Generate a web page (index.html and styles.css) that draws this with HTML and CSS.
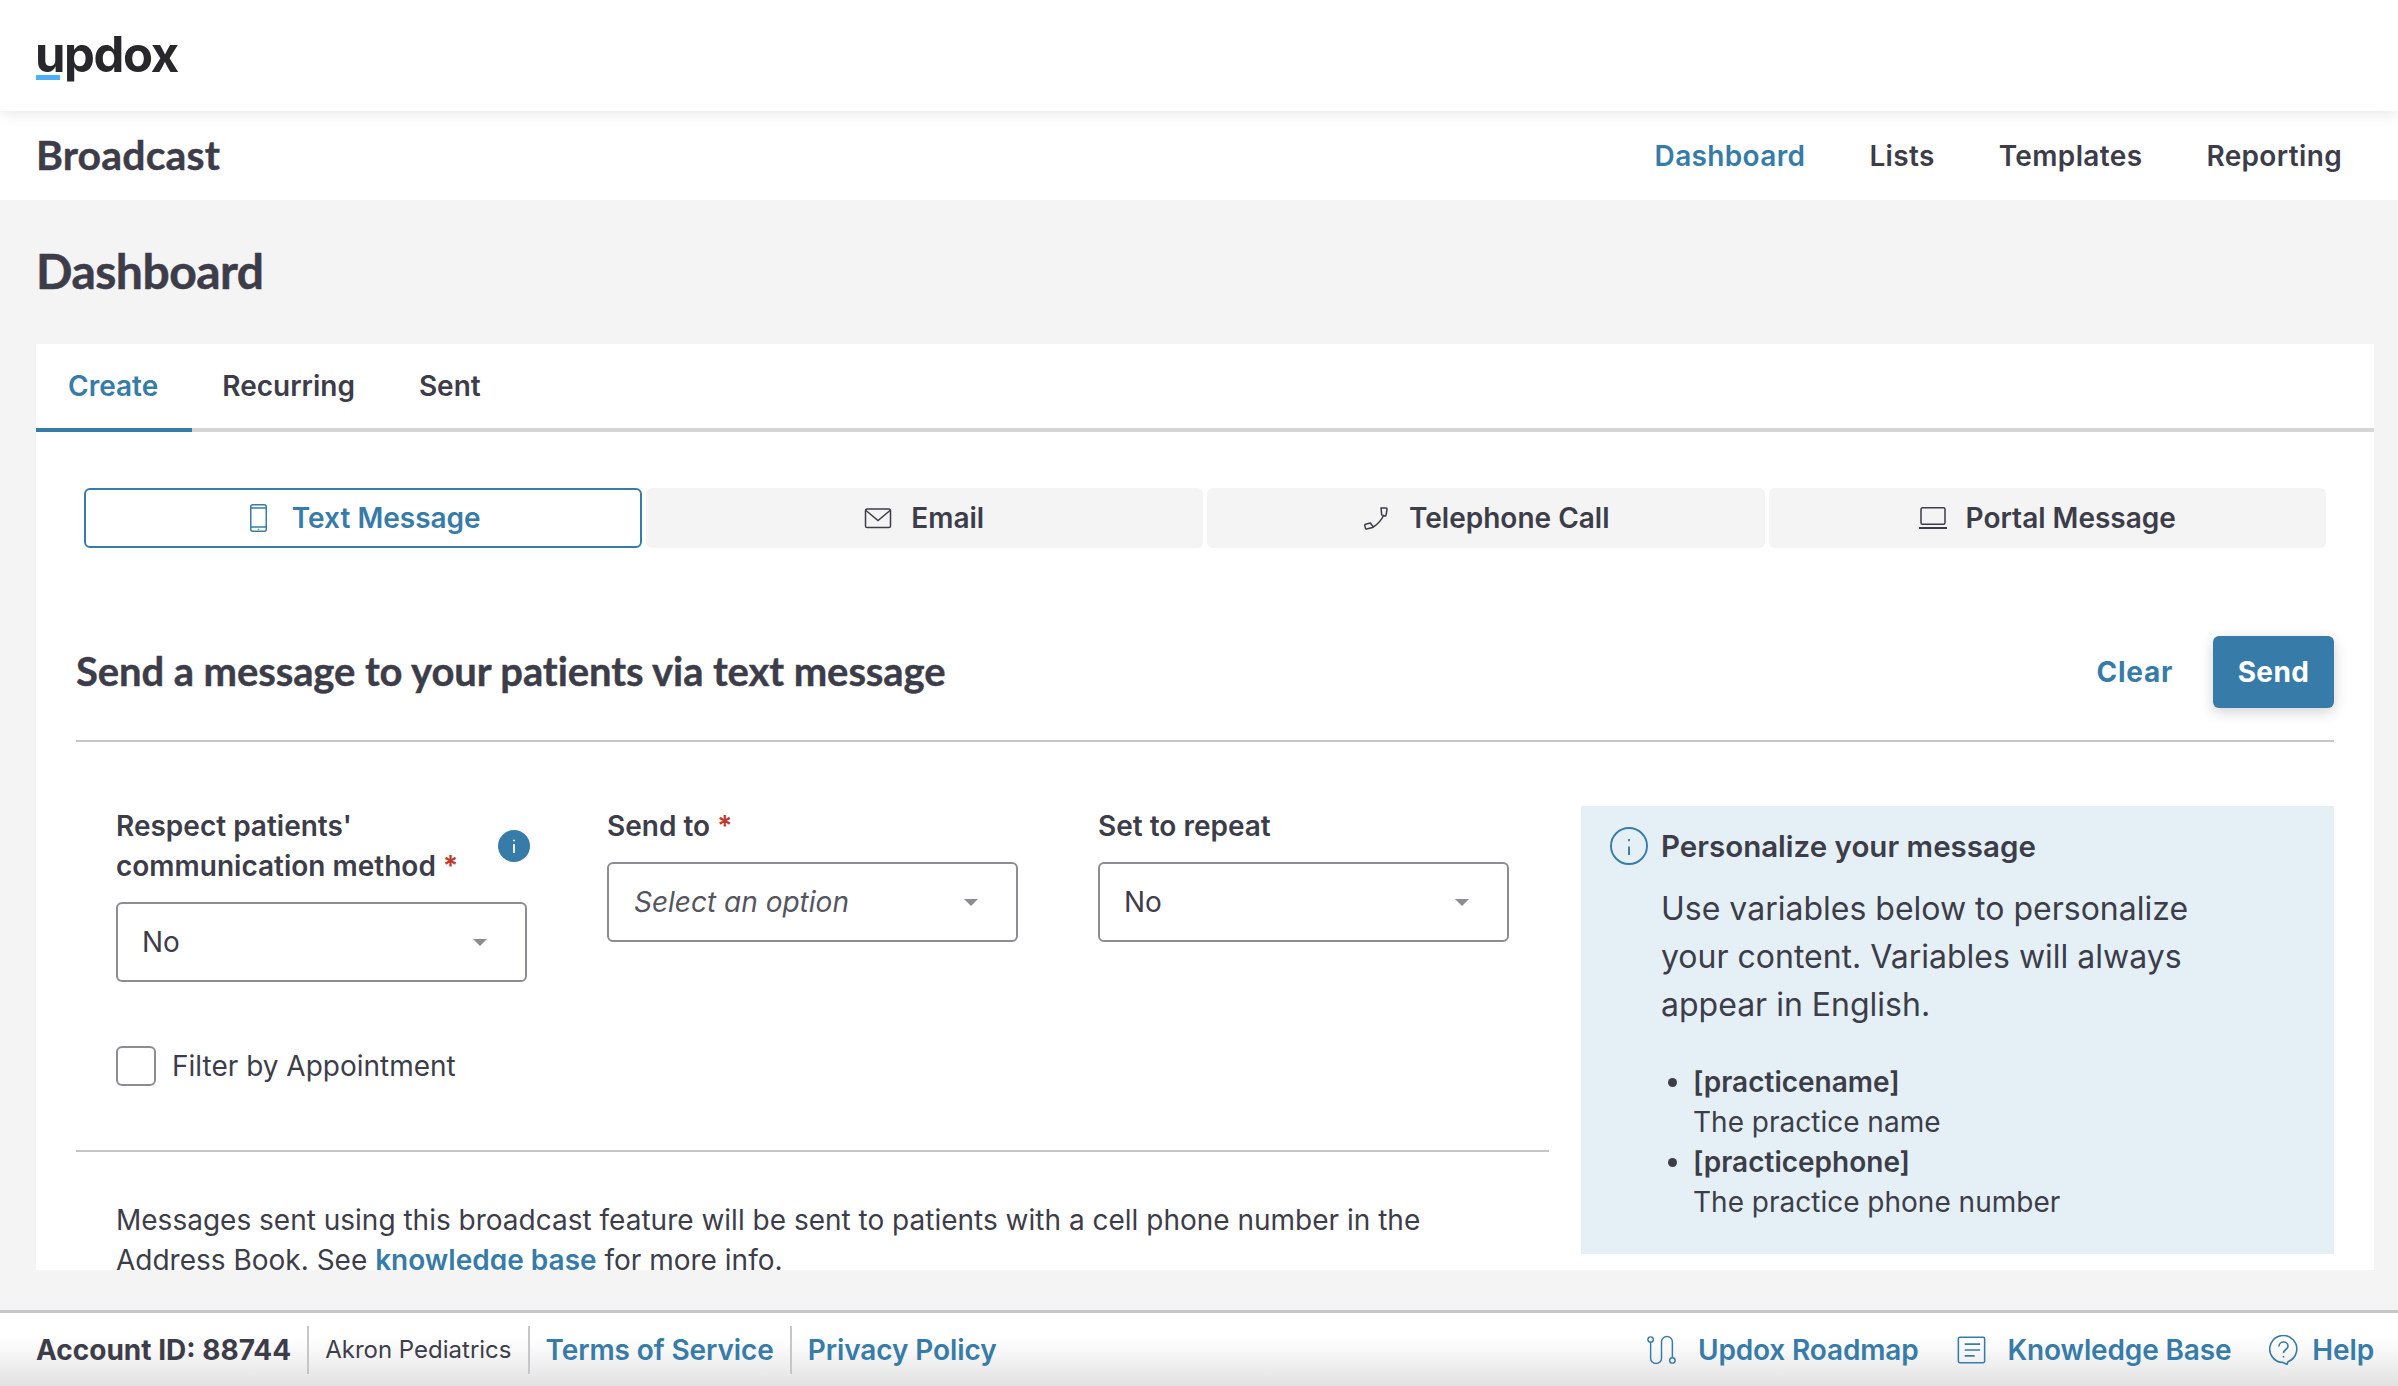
FILE: index.html
```html
<!DOCTYPE html>
<html lang="en">
<head>
<meta charset="utf-8">
<title>Broadcast Dashboard</title>
<link rel="stylesheet" href="styles.css">
</head>
<body>
<header class="topbar">
  <div class="logo"><span class="logo-text">updox</span><span class="logo-bar"></span></div>
</header>
<nav class="subnav">
  <div class="subnav-title">Broadcast</div>
  <div class="subnav-links">
    <a class="subnav-link is-active">Dashboard</a>
    <a class="subnav-link">Lists</a>
    <a class="subnav-link">Templates</a>
    <a class="subnav-link">Reporting</a>
  </div>
</nav>
<main class="main">
  <h1 class="page-title">Dashboard</h1>
  <section class="card">
    <div class="tabs">
      <a class="tab is-active">Create</a>
      <a class="tab">Recurring</a>
      <a class="tab">Sent</a>
    </div>
    <div class="channels">
      <a class="channel is-active">
        <svg class="channel-icon" viewBox="0 0 28 28" fill="none" stroke="currentColor" stroke-width="1.500"><rect x="5.750" y=".750" width="15.500" height="26.500" rx="2"/><path d="M5.750 4h15.500M5.750 23h15.500M13.500 24.700v1"/></svg>
        <span>Text Message</span>
      </a>
      <a class="channel">
        <svg class="channel-icon" viewBox="0 0 28 24" fill="none" stroke="currentColor" stroke-width="1.500"><rect x="1.500" y="3" width="25" height="18.500" rx="1.600"/><path d="M2 4.500l12 10 12-10"/></svg>
        <span>Email</span>
      </a>
      <a class="channel">
        <svg class="channel-icon" viewBox="-2.500 -2.500 28 28" fill="none" stroke="currentColor" stroke-width="1.500" stroke-linejoin="round"><path d="M16.500 1.500h5.300c.5 0 .7.400.7.900-.2 2.400-.6 5-1.300 7.200l-4-1.200zM19 9c-2 4.500-5.500 8.500-10.200 11.500L5.800 16.500 1 17.700c-.5.100-.8.600-.7 1.100l.7 3c.1.500.5.700 1 .6l7-1.600"/></svg>
        <span>Telephone Call</span>
      </a>
      <a class="channel">
        <svg class="channel-icon" viewBox="0 0 28 24" fill="none" stroke="currentColor" stroke-width="1.500"><rect x="2" y="1.750" width="24" height="16.500" rx="1.500"/><path d="M0 22h28" stroke-width="2"/></svg>
        <span>Portal Message</span>
      </a>
    </div>
    <div class="compose-head">
      <h2 class="compose-title">Send a message to your patients via text message</h2>
      <div class="compose-actions">
        <a class="link-clear">Clear</a>
        <button class="btn-send" type="button">Send</button>
      </div>
    </div>
    <div class="compose-body">
      <div class="compose-left">
        <div class="fields">
          <div class="field">
            <div class="field-label field-label-info">
              <span>Respect patients' communication method <span class="req">*</span></span>
              <span class="info-dot">
                <svg viewBox="0 0 32 32" class="info-dot-svg"><circle cx="16" cy="16" r="16" fill="#377ca8"/><path d="M16 9.700v1.600M16 14v9" stroke="#fff" stroke-width="1.800"/></svg>
              </span>
            </div>
            <div class="select"><span>No</span><i class="caret"></i></div>
          </div>
          <div class="field">
            <div class="field-label">Send to <span class="req">*</span></div>
            <div class="select"><span class="placeholder">Select an option</span><i class="caret"></i></div>
          </div>
          <div class="field">
            <div class="field-label">Set to repeat</div>
            <div class="select"><span>No</span><i class="caret"></i></div>
          </div>
        </div>
        <label class="check"><span class="check-box"></span><span>Filter by Appointment</span></label>
        <p class="notice">Messages sent using this broadcast feature will be sent to patients with a cell phone number in the Address Book. See <a class="notice-link">knowledge base</a> for more info.</p>
      </div>
      <aside class="panel">
        <svg class="panel-icon" viewBox="0 0 38 38" fill="none" stroke="#377ca8" stroke-width="1.900"><circle cx="19" cy="19" r="18"/><path d="M19 12v2.200M19 19.500V28"/></svg>
        <div class="panel-body">
          <h3 class="panel-title">Personalize your message</h3>
          <p class="panel-text">Use variables below to personalize your content. Variables will always appear in English.</p>
          <ul class="panel-list">
            <li><b>[practicename]</b><br>The practice name</li>
            <li><b>[practicephone]</b><br>The practice phone number</li>
          </ul>
        </div>
      </aside>
    </div>
  </section>
</main>
<footer class="footer">
  <div class="footer-left">
    <span class="foot-item foot-account">Account ID: 88744</span>
    <span class="foot-item foot-practice">Akron Pediatrics</span>
    <a class="foot-item foot-link">Terms of Service</a>
    <a class="foot-item foot-link">Privacy Policy</a>
  </div>
  <div class="footer-right">
    <a class="foot-action">
      <svg class="foot-icon" viewBox="0 0 32 32" fill="none" stroke="currentColor" stroke-width="1.600"><circle cx="4" cy="4.500" r="3"/><circle cx="28" cy="27.500" r="3"/><path d="M4 7.500V25a6 6 0 0 0 12 0V7a6 6 0 0 1 12 0v17.500"/></svg>
      <span>Updox Roadmap</span>
    </a>
    <a class="foot-action">
      <svg class="foot-icon" viewBox="0 0 32 32" fill="none" stroke="currentColor" stroke-width="1.700"><rect x="1.500" y="2" width="29" height="28" rx="1.500"/><path d="M8.500 9.500h17M8.500 16h17M8.500 22.500h11"/></svg>
      <span>Knowledge Base</span>
    </a>
    <a class="foot-action foot-action-help">
      <svg class="foot-icon" viewBox="0 0 29 30" fill="none" stroke="currentColor" stroke-width="1.600" stroke-linejoin="round"><path d="M14.300 27.500A13.500 13.500 0 1 1 19 26.650L18 29.500z"/><path d="M10 11.500c0-2.700 2-4.500 4.500-4.500S19 8.800 19 11.200c0 3.300-4.500 3.300-4.500 6.800M14.500 21v1.500"/></svg>
      <span>Help</span>
    </a>
  </div>
</footer>
</body>
</html>
```

FILE: styles.css
```css
* { box-sizing: border-box; }
html, body { margin: 0; height: 100%; }
body {
  height: 1386px;
  overflow: hidden;
  display: flex;
  flex-direction: column;
  background: #f4f4f4;
  color: #3d3d4a;
  font-family: Inter, "Liberation Sans", sans-serif;
  font-size: 28px;
}
a { text-decoration: none; }
.topbar {
  position: relative;
  z-index: 1;
  flex: none;
  height: 111px;
  background: #fff;
  box-shadow: 0 2px 14px rgba(0, 0, 0, .1);
  padding: 23px 36px 0;
}
.logo { position: relative; display: inline-block; height: 64px; margin-left: -1px; }
.logo-text {
  font-family: Inter, sans-serif;
  font-weight: 700;
  font-size: 49px;
  line-height: 64px;
  letter-spacing: -1.400px;
  color: #28282c;
}
.logo-bar {
  position: absolute;
  left: 1px;
  top: 52px;
  width: 24px;
  height: 5px;
  background: #4fb0fa;
}
.subnav {
  flex: none;
  height: 89px;
  background: #fff;
  display: flex;
  align-items: center;
  justify-content: space-between;
  padding: 0 56px 0 36px;
}
.subnav-title {
  font-family: Lato, sans-serif;
  font-weight: 700;
  font-size: 41px;
  line-height: 48px;
  margin-top: -2px;
  letter-spacing: .15px;
  -webkit-text-stroke: .4px #3d3d4a;
  color: #3d3d4a;
}
.subnav-links { display: flex; gap: 64px; }
.subnav-link { font-weight: 600; font-size: 28px; letter-spacing: .35px; color: #3d3d4a; }
.subnav-link.is-active { color: #377ca8; }
.main { flex: none; height: 1110px; display: flex; flex-direction: column; }
.page-title {
  flex: none;
  height: 144px;
  margin: 0;
  padding: 0 36px;
  line-height: 142px;
  font-family: Lato, sans-serif;
  font-weight: 700;
  font-size: 48px;
  letter-spacing: -.5px;
  -webkit-text-stroke: .5px #3d3d4a;
  color: #3d3d4a;
}
.card {
  flex: none;
  height: 926px;
  margin: 0 24px 0 36px;
  background: #fff;
  overflow: hidden;
}
.tabs { display: flex; height: 88px; border-bottom: 4px solid #d6d6d6; }
.tab {
  height: 88px;
  padding: 0 32px;
  line-height: 84px;
  font-weight: 600;
  font-size: 28px;
  color: #3d3d4a;
}
.tab.is-active {
  padding-right: 34px;
  margin-right: -2px;
  color: #377ca8;
  border-bottom: 4px solid #377ca8;
}
.channels {
  display: grid;
  grid-template-columns: repeat(4, 1fr);
  gap: 4px;
  padding: 56px 48px 0;
}
.channel {
  height: 60px;
  display: flex;
  align-items: center;
  justify-content: center;
  gap: 19px;
  border-radius: 6px;
  background: #f4f4f4;
  font-weight: 600;
  font-size: 28px;
  color: #3d3d4a;
}
.channel.is-active { background: #fff; border: 2px solid #377ca8; color: #377ca8; }
.channel-icon { width: 28px; height: 28px; flex: none; }
.compose-head {
  box-sizing: content-box;
  display: flex;
  align-items: center;
  justify-content: space-between;
  height: 72px;
  margin: 88px 40px 0;
  padding-bottom: 32px;
  border-bottom: 2px solid #c6c6ca;
}
.compose-title {
  margin: -3px 0 0;
  font-family: Lato, sans-serif;
  font-weight: 700;
  font-size: 40px;
  letter-spacing: -.1px;
  -webkit-text-stroke: .4px #3d3d4a;
  color: #3d3d4a;
}
.compose-actions { display: flex; align-items: center; gap: 40px; }
.link-clear { font-weight: 700; font-size: 28px; color: #377ca8; letter-spacing: .7px; }
.btn-send {
  width: 121px;
  height: 72px;
  border: 0;
  border-radius: 6px;
  background: #377ca8;
  color: #fff;
  font-family: inherit;
  font-weight: 700;
  font-size: 28px;
  letter-spacing: .4px;
  box-shadow: 0 4px 14px rgba(0, 0, 0, .18);
}
.compose-body { display: flex; gap: 32px; margin: 64px 40px 0; }
.compose-left { width: 1473px; flex: none; }
.fields {
  display: flex;
  align-items: flex-start;
  gap: 80px;
  padding: 0 40px;
}
.field { width: 411px; flex: none; }
.field-label {
  font-weight: 600;
  font-size: 28px;
  line-height: 40px;
  color: #3d3d4a;
  margin-bottom: 16px;
}
.field-label-info { display: flex; align-items: center; justify-content: space-between; gap: 24px; }
.req { color: #c0392b; }
.info-dot { flex: none; display: flex; margin: 0 -3px 0 0; }
.info-dot-svg { width: 32px; height: 32px; }
.select {
  height: 80px;
  display: flex;
  align-items: center;
  justify-content: space-between;
  padding: 0 38px 0 24px;
  border: 2px solid #8c8c92;
  border-radius: 6px;
  background: #fff;
  font-size: 28px;
}
.placeholder { margin-left: 1px; font-style: italic; color: #55555f; }
.caret {
  width: 0;
  height: 0;
  border-left: 7px solid transparent;
  border-right: 7px solid transparent;
  border-top: 7px solid #8c8c92;
}
.check {
  display: flex;
  align-items: center;
  gap: 16px;
  margin: 64px 0 0 40px;
  font-size: 28px;
  line-height: 40px;
}
.check-box {
  width: 40px;
  height: 40px;
  border: 2px solid #8c8c92;
  border-radius: 6px;
  background: #fff;
}
.notice {
  margin: 64px 0 0;
  padding: 48px 120px 0 40px;
  border-top: 2px solid #c6c6ca;
  font-size: 28px;
  line-height: 40px;
}
.notice-link { font-weight: 600; color: #377ca8; }
.panel {
  flex: none;
  width: 753px;
  height: 448px;
  display: flex;
  gap: 13px;
  padding: 21px 29px 0;
  background: #e5f0f6;
}
.panel-icon { width: 38px; height: 38px; flex: none; }
.panel-body { min-width: 0; padding-right: 100px; }
.panel-title {
  margin: 0;
  font-weight: 600;
  font-size: 29.500px;
  line-height: 38px;
  color: #3d3d4a;
}
.panel-text { margin: 20px 0 0; font-size: 32px; line-height: 48px; }
.panel-list {
  margin: 33px 0 0;
  padding: 0 0 0 32px;
  font-size: 28px;
  line-height: 40px;
}
.panel-list b { font-weight: 600; }
.footer {
  flex: none;
  height: 76px;
  display: flex;
  align-items: center;
  justify-content: space-between;
  padding: 0 24px 0 36px;
  border-top: 3px solid #c6c6ca;
  background: linear-gradient(#fff 0%, #fff 35%, #e2e2e2 100%);
}
.footer-left { display: flex; align-items: stretch; height: 48px; }
.foot-item {
  display: flex;
  align-items: center;
  padding: 0 16px;
  border-left: 2px solid #c6c6ca;
  font-size: 28px;
}
.foot-account { padding-left: 0; border-left: 0; font-weight: 700; }
.foot-practice { font-size: 24px; }
.foot-link { font-weight: 600; letter-spacing: -.1px; color: #377ca8; }
.footer-right { display: flex; align-items: center; gap: 38px; }
.foot-action {
  display: flex;
  align-items: center;
  gap: 22px;
  font-weight: 600;
  font-size: 28px;
  letter-spacing: -.15px;
  color: #377ca8;
}
.foot-action-help { gap: 14px; }
.foot-icon { width: 29px; height: 30px; flex: none; }
```
